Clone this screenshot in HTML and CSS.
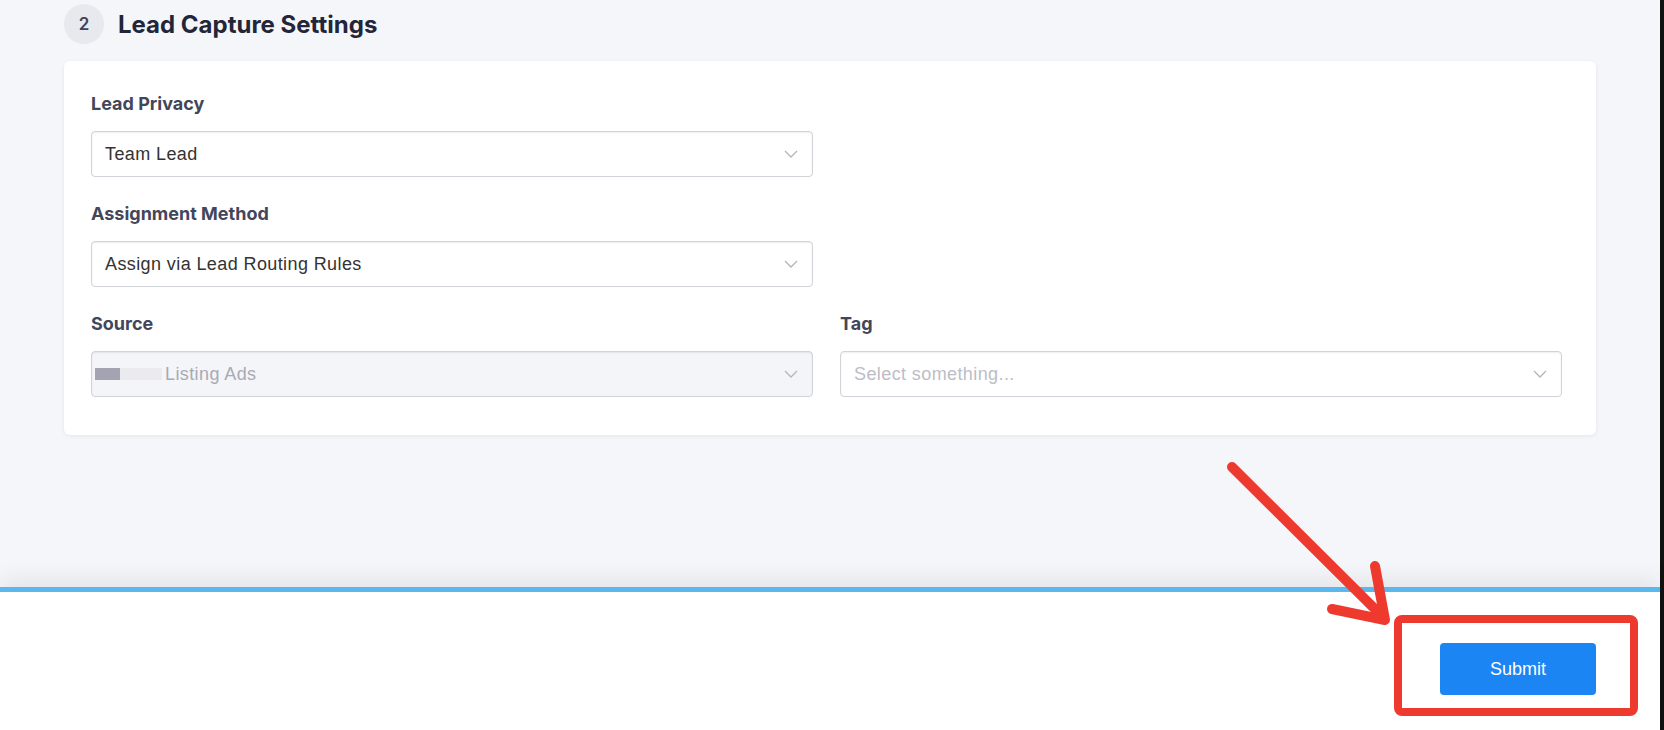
FILE: index.html
```html
<!DOCTYPE html>
<html lang="en">
<head>
  <meta charset="UTF-8">
  <meta name="viewport" content="width=device-width, initial-scale=1.0">
  <title>Lead Capture Settings</title>
  <link rel="stylesheet" href="styles.css">
</head>
<body>
  <div class="app">
    <main class="content">
      <div class="step-header">
        <span class="step-badge">2</span>
        <h2>Lead Capture Settings</h2>
      </div>

      <section class="card">
        <div class="field">
          <label>Lead Privacy</label>
          <div class="select">
            <span>Team Lead</span>
            <svg class="chevron" width="14" height="8" viewBox="0 0 14 8"><polyline points="1,1 7,7 13,1"/></svg>
          </div>
        </div>

        <div class="field">
          <label>Assignment Method</label>
          <div class="select">
            <span>Assign via Lead Routing Rules</span>
            <svg class="chevron" width="14" height="8" viewBox="0 0 14 8"><polyline points="1,1 7,7 13,1"/></svg>
          </div>
        </div>

        <div class="field-row">
          <div class="field">
            <label>Source</label>
            <div class="select disabled">
              <span class="value">
                <span class="redact-dark"></span><span class="redact-light"></span>Listing Ads
              </span>
              <svg class="chevron" width="14" height="8" viewBox="0 0 14 8"><polyline points="1,1 7,7 13,1"/></svg>
            </div>
          </div>
          <div class="field">
            <label>Tag</label>
            <div class="select">
              <span class="placeholder">Select something...</span>
              <svg class="chevron" width="14" height="8" viewBox="0 0 14 8"><polyline points="1,1 7,7 13,1"/></svg>
            </div>
          </div>
        </div>
      </section>
    </main>

    <footer class="actions">
      <button type="button" class="submit-btn">Submit</button>
    </footer>

    <!-- annotation drawn over the screenshot -->
    <svg class="annotation" width="1660" height="730" viewBox="0 0 1660 730">
      <rect x="1398" y="619" width="236" height="93" rx="4" class="mark-box"/>
      <line x1="1232" y1="467" x2="1384" y2="618" class="mark-line"/>
      <polyline points="1375,566 1385,620 1332,609" class="mark-line"/>
    </svg>
  </div>
  <div class="edge"></div>
</body>
</html>
```

FILE: styles.css
```css
body {
  margin: 0;
  height: 730px;
  display: flex;
  overflow: hidden;
  font-family: Inter, "Noto Sans", sans-serif;
  background-color: #f5f6fa;
}

.app {
  flex: 1;
  display: flex;
  flex-direction: column;
  position: relative;
}

.edge {
  width: 4px;
  background-color: #111;
}

.content {
  flex: 1;
  padding: 4px 64px 0 64px;
}

.step-header {
  display: flex;
  align-items: center;
  height: 40px;
}

.step-badge {
  width: 40px;
  height: 40px;
  border-radius: 50%;
  background-color: #e8e9ee;
  color: #40435a;
  font-size: 17px;
  font-weight: 600;
  display: flex;
  align-items: center;
  justify-content: center;
}

.step-header h2 {
  margin: 0 0 0 14px;
  font-size: 24px;
  font-weight: 700;
  color: #232638;
}

.card {
  margin-top: 17px;
  background-color: #fff;
  border-radius: 6px;
  box-shadow: 0 1px 4px rgba(20, 30, 60, 0.07);
  padding: 32px 34px 38px 27px;
}

.field {
  width: 722px;
  margin-bottom: 26px;
}

.field label {
  display: block;
  font-size: 18px;
  line-height: 22px;
  font-weight: 700;
  color: #43465a;
  margin-bottom: 16px;
}

.field-row {
  display: flex;
  gap: 27px;
}

.field-row .field {
  margin-bottom: 0;
}

.select {
  height: 46px;
  box-sizing: border-box;
  border: 1px solid #d2d3d8;
  border-radius: 4px;
  box-shadow: inset 0 1px 2px rgba(0, 0, 0, 0.07);
  background-color: #fff;
  display: flex;
  align-items: center;
  justify-content: space-between;
  padding: 0 14px 0 13px;
  font-family: "Liberation Sans", Arial, sans-serif;
  font-size: 18px;
  letter-spacing: 0.4px;
  color: #333;
}

.select.disabled {
  background-color: #f4f5f8;
  padding-left: 3px;
  color: #a9aab4;
}

.select .value {
  display: flex;
  align-items: center;
}

.redact-dark {
  display: inline-block;
  width: 25px;
  height: 12px;
  background-color: #a3a3b1;
}

.redact-light {
  display: inline-block;
  width: 42px;
  height: 12px;
  margin-right: 3px;
  background-color: #ebebef;
}

.placeholder {
  color: #bcbdc6;
}

.chevron {
  fill: none;
  stroke: #b3b4bc;
  stroke-width: 1.3;
}

.actions {
  height: 143px;
  box-sizing: border-box;
  background-color: #fff;
  border-top: 5px solid #5ab8ee;
  box-shadow: 0 -8px 22px rgba(0, 0, 0, 0.07);
  display: flex;
  justify-content: flex-end;
  align-items: flex-start;
  padding: 51px 64px 0 0;
}

.submit-btn {
  width: 156px;
  height: 52px;
  border: none;
  border-radius: 4px;
  background-color: #1c85f4;
  color: #fff;
  font-family: "Liberation Sans", Arial, sans-serif;
  font-size: 18px;
  cursor: pointer;
}

.annotation {
  position: absolute;
  top: 0;
  left: 0;
  pointer-events: none;
}

.mark-box {
  fill: none;
  stroke: #ee3a2e;
  stroke-width: 8;
}

.mark-line {
  fill: none;
  stroke: #ee3a2e;
  stroke-width: 10;
  stroke-linecap: round;
  stroke-linejoin: round;
}
```
